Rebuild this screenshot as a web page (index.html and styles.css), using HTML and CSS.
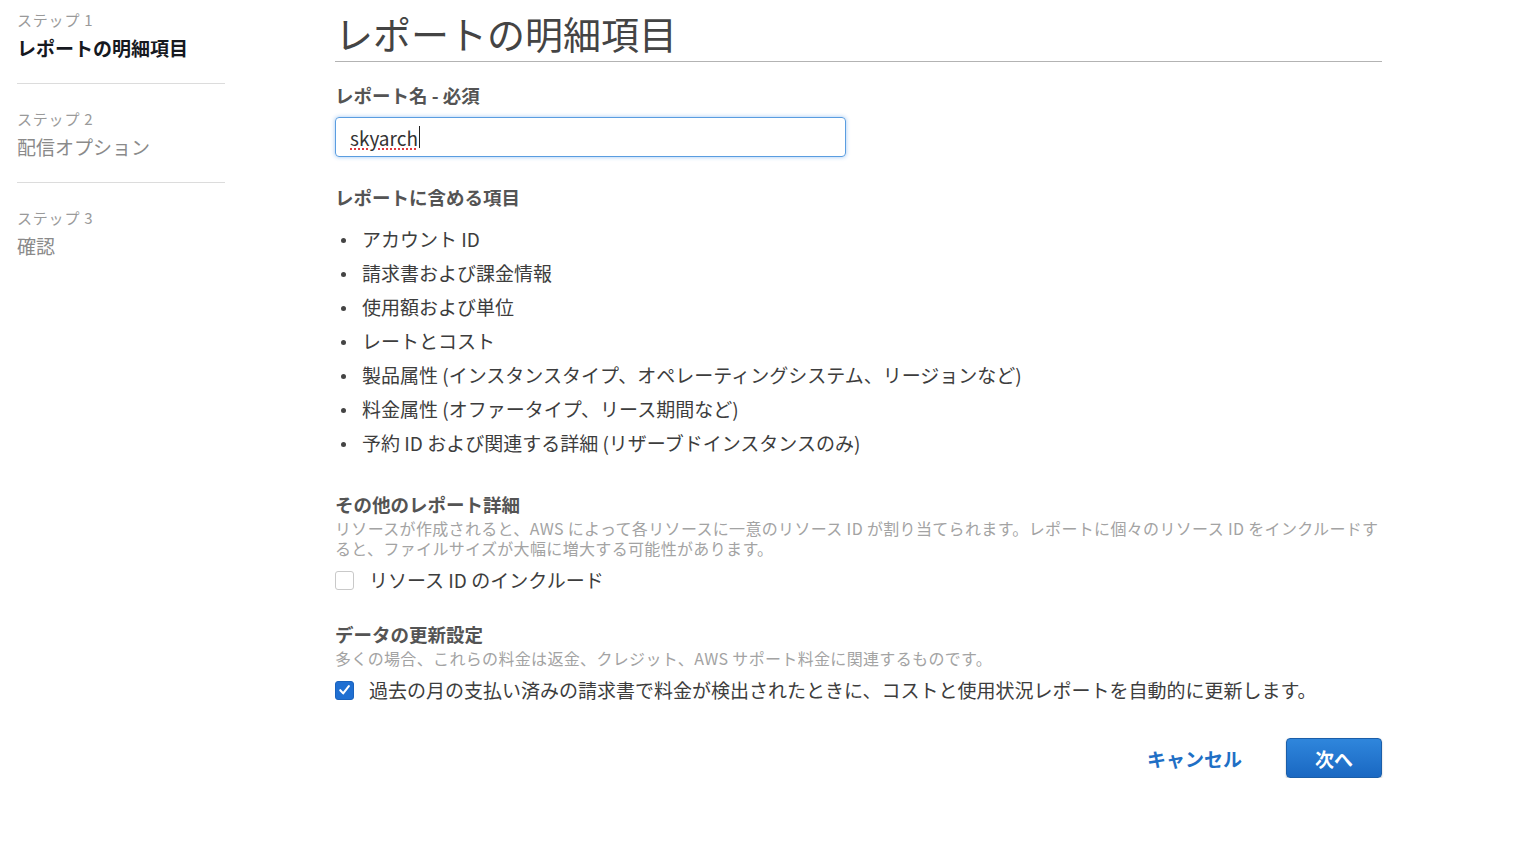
FILE: index.html
```html
<!DOCTYPE html>
<html lang="ja">
<head>
<meta charset="utf-8">
<title>レポートの明細項目</title>
<link rel="stylesheet" href="styles.css">
</head>
<body>
<div class="page">
  <nav class="steps">
    <div class="step step-first">
      <div class="step-label">ステップ 1</div>
      <div class="step-title current">レポートの明細項目</div>
    </div>
    <div class="step">
      <div class="step-label">ステップ 2</div>
      <div class="step-title">配信オプション</div>
    </div>
    <div class="step step-last">
      <div class="step-label">ステップ 3</div>
      <div class="step-title">確認</div>
    </div>
  </nav>
  <main class="main">
    <h1 class="page-title">レポートの明細項目</h1>

    <div class="field-label">レポート名 - 必須</div>
    <div class="text-input"><span class="typed">skyarch</span><span class="caret"></span></div>

    <div class="section-label mt-include">レポートに含める項目</div>
    <ul class="items">
      <li>アカウント ID</li>
      <li>請求書および課金情報</li>
      <li>使用額および単位</li>
      <li>レートとコスト</li>
      <li>製品属性 (インスタンスタイプ、オペレーティングシステム、リージョンなど)</li>
      <li>料金属性 (オファータイプ、リース期間など)</li>
      <li>予約 ID および関連する詳細 (リザーブドインスタンスのみ)</li>
    </ul>

    <div class="section-label mt-other">その他のレポート詳細</div>
    <p class="desc">リソースが作成されると、AWS によって各リソースに一意のリソース ID が割り当てられます。レポートに個々のリソース ID をインクルードすると、ファイルサイズが大幅に増大する可能性があります。</p>
    <label class="check-row">
      <span class="box"></span>
      <span>リソース ID のインクルード</span>
    </label>

    <div class="section-label mt-data">データの更新設定</div>
    <p class="desc">多くの場合、これらの料金は返金、クレジット、AWS サポート料金に関連するものです。</p>
    <label class="check-row">
      <span class="box checked"><svg viewBox="0 0 18 18" width="18" height="18"><path d="M4.5 9.2 L7.6 12.6 L13.6 4.8" fill="none" stroke="#fff" stroke-width="2.2" stroke-linecap="round" stroke-linejoin="round"/></svg></span>
      <span>過去の月の支払い済みの請求書で料金が検出されたときに、コストと使用状況レポートを自動的に更新します。</span>
    </label>

    <div class="actions">
      <button class="btn-link" type="button">キャンセル</button>
      <button class="btn-primary" type="button">次へ</button>
    </div>
  </main>
</div>
</body>
</html>
```

FILE: styles.css
```css
* { box-sizing: border-box; }

html, body {
  margin: 0;
  padding: 0;
  background: #ffffff;
}

body {
  font-family: "Noto Sans CJK JP", "Noto Sans", sans-serif;
  color: #3d3d3d;
}

.page {
  display: flex;
  align-items: flex-start;
  gap: 110px;
}

/* Sidebar steps */
.steps {
  width: 225px;
  padding-left: 17px;
  flex-shrink: 0;
}

.step {
  padding: 25px 0 21px;
  border-bottom: 1px solid #dcdcdc;
}

.step-first { padding-top: 10px; }
.step-last { border-bottom: none; }

.step-label {
  font-size: 15px;
  line-height: 20px;
  letter-spacing: 0.8px;
  color: #9a9a9a;
  margin-bottom: 4px;
}

.step-title {
  font-size: 19px;
  line-height: 28px;
  color: #8a8a8a;
}

.step-title.current {
  color: #16191f;
  font-weight: 700;
}

/* Main */
.main {
  width: 1047px;
  flex-shrink: 0;
}

.page-title {
  margin: 0;
  padding: 10px 0 5px 0;
  font-size: 38px;
  line-height: 46px;
  font-weight: 400;
  color: #444444;
  border-bottom: 1px solid #b3b3b3;
}

.field-label,
.section-label {
  font-size: 18.5px;
  line-height: 24px;
  font-weight: 700;
  color: #545454;
}

.field-label { margin-top: 21px; }

.text-input {
  margin-top: 10px;
  width: 511px;
  height: 40px;
  border: 1px solid #5a9de0;
  border-radius: 4px;
  box-shadow: 0 0 4px rgba(40, 130, 230, 0.45);
  display: flex;
  align-items: center;
  padding-left: 14px;
  font-size: 19px;
  color: #333;
}

.typed {
  text-decoration: underline dotted #e0393e;
  text-decoration-thickness: 2px;
  text-underline-offset: 3px;
}

.caret {
  width: 1px;
  height: 22px;
  background: #222;
  margin-left: 1px;
}

.mt-include { margin-top: 28px; }
.mt-other { margin-top: 32px; }
.mt-data { margin-top: 30px; }

.items {
  list-style: none;
  margin: 13px 0 0;
  padding: 0;
}

.items li {
  display: flex;
  align-items: center;
  font-size: 19px;
  line-height: 34px;
  color: #3d3d3d;
}

.items li::before {
  content: "";
  width: 5px;
  height: 5px;
  border-radius: 50%;
  background: #444;
  margin: 2px 16px 0 6px;
  flex-shrink: 0;
}

.desc {
  margin: 2px 0 0;
  font-size: 16px;
  line-height: 20px;
  letter-spacing: 0.34px;
  color: #a3a3a3;
}

.check-row {
  margin-top: 10px;
  display: flex;
  align-items: center;
  gap: 15px;
  font-size: 19px;
  line-height: 24px;
  color: #3d3d3d;
}

.box {
  width: 19px;
  height: 19px;
  border: 1px solid #c9c9c9;
  border-radius: 3px;
  background: #fff;
  flex-shrink: 0;
  display: flex;
  align-items: center;
  justify-content: center;
}

.box.checked {
  background: #1f6fd2;
  border-color: #1a62bd;
}

.box svg { display: block; }

.actions {
  margin-top: 36px;
  display: flex;
  justify-content: flex-end;
  align-items: center;
  gap: 44px;
}

.btn-link {
  border: none;
  background: none;
  padding: 0;
  font-family: inherit;
  font-size: 19px;
  font-weight: 700;
  color: #1f6fc5;
  cursor: pointer;
}

.btn-primary {
  width: 96px;
  height: 40px;
  border: 1px solid #1b5ea8;
  border-radius: 4px;
  background: linear-gradient(#2f86dc, #1a68c2);
  color: #ffffff;
  font-family: inherit;
  font-size: 19px;
  font-weight: 700;
  box-shadow: 0 1px 2px rgba(0, 0, 0, 0.25);
  cursor: pointer;
}
```
